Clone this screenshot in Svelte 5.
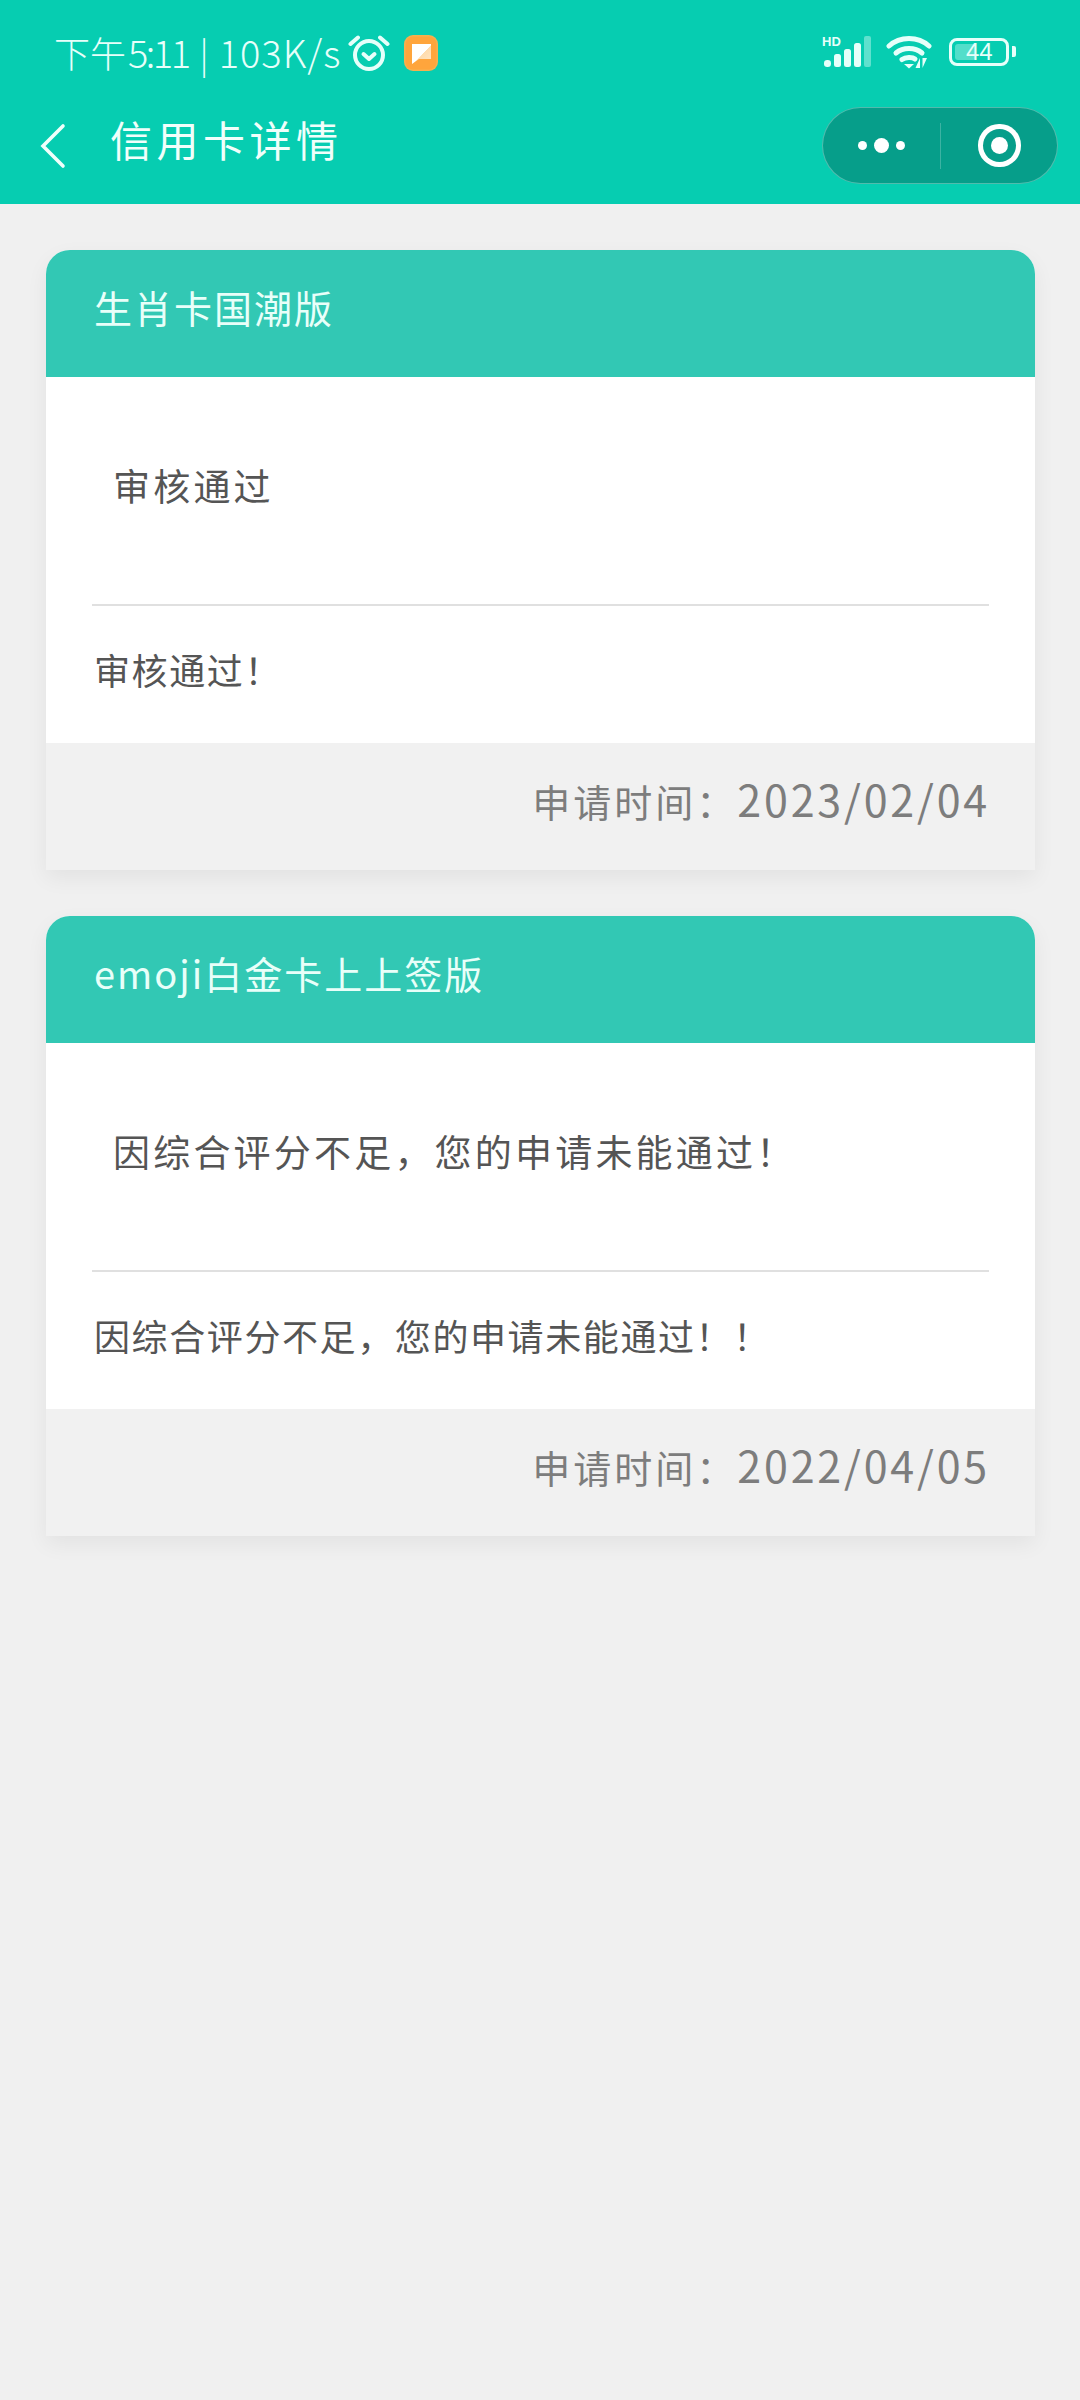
<script>
  const cards = [
    { name: '生肖卡国潮版', status: '审核通过', reason: '审核通过！', label: '申请时间：', date: '2023/02/04' },
    { name: 'emoji白金卡上上签版', status: '因综合评分不足，您的申请未能通过！', reason: '因综合评分不足，您的申请未能通过！！', label: '申请时间：', date: '2022/04/05' }
  ];
</script>

<div class="page">
  <header class="top">
    <div class="status">
      <div class="status-left">
        <span class="clock">下午</span>
        <span class="clock time">5:11</span>
        <span class="clock bar">|</span>
        <span class="clock speed">103K/s</span>
        <svg class="alarm" viewBox="0 0 42 38" width="42" height="38" fill="none" stroke="#e6fffa" stroke-width="4" stroke-linecap="round" stroke-linejoin="round">
          <circle cx="21" cy="21" r="14"/>
          <path d="M2.5 10 L10 3.5 M39.5 10 L32 3.5"/>
          <path d="M15.5 20 L21 25 L26.5 20"/>
        </svg>
        <svg class="app" viewBox="0 0 34 36" width="34" height="36">
          <defs>
            <linearGradient id="note" x1="0" y1="0" x2="1" y2="1">
              <stop offset="0" stop-color="#fff"/>
              <stop offset=".52" stop-color="#fff"/>
              <stop offset=".54" stop-color="#ffdcae"/>
              <stop offset="1" stop-color="#ffe6c6"/>
            </linearGradient>
          </defs>
          <rect width="34" height="36" rx="9" fill="#f7b04e"/>
          <rect x="1.5" y="1.5" width="31" height="33" rx="8" fill="#ffa53c"/>
          <path d="M8 9 H27 V24 H15 L8 29 Z" fill="url(#note)"/>
        </svg>
      </div>
      <div class="status-right">
        <svg class="signal" viewBox="0 0 50 32" width="50" height="32">
          <text x="0" y="10" class="hd">HD</text>
          <rect x="2" y="24" width="7" height="7" rx="3.2" fill="#e6fffa"/>
          <rect x="12" y="18" width="7" height="13" rx="2.5" fill="#e6fffa"/>
          <rect x="22" y="13" width="7" height="18" rx="2.5" fill="#e6fffa"/>
          <rect x="32" y="7" width="7" height="24" rx="2.5" fill="#e6fffa"/>
          <rect x="42" y="0" width="7" height="31" rx="2" fill="#e6fffa" opacity=".4"/>
        </svg>
        <svg class="wifi" viewBox="0 0 46 34" width="46" height="34" fill="none" stroke="#e6fffa" stroke-width="5" stroke-linecap="round">
          <path d="M3 11 C14 1 32 1 43 11"/>
          <path d="M10 18 C17 12 29 12 36 18"/>
          <path d="M16 24.5 C19.5 22 26.5 22 29 24"/>
          <path d="M18 29 H28 L23 33.5 Z" fill="#e6fffa" stroke="none"/>
          <path d="M34 23 V33 H29.5 Z M36.5 33 V23 H41 Z" fill="#e6fffa" stroke="none"/>
        </svg>
        <div class="battery">
          <div class="shell"><span class="level"></span><span class="num">44</span></div>
          <span class="cap"></span>
        </div>
      </div>
    </div>
    <nav class="nav">
      <div class="nav-left">
        <svg class="back" viewBox="0 0 26 46" width="26" height="46" fill="none" stroke="#f0fffb" stroke-width="3.6" stroke-linecap="round">
          <path d="M23 3 L3 23 L23 43"/>
        </svg>
        <h1>信用卡详情</h1>
      </div>
      <div class="capsule">
        <div class="dots"><i></i><b></b><i></i></div>
        <span class="sep"></span>
        <div class="target"><span></span></div>
      </div>
    </nav>
  </header>

  <main class="list">
    {#each cards as c}
      <article class="card">
        <div class="card-head">{c.name}</div>
        <div class="card-status"><span>{c.status}</span></div>
        <div class="card-reason">{c.reason}</div>
        <div class="card-foot">{c.label}<span class="date">{c.date}</span></div>
      </article>
    {/each}
  </main>
</div>

<style>
  :global(body) { margin: 0; background: #f0f0f0; }
  .page {
    min-height: 2400px;
    background: #f0f0f0;
    font-family: "Noto Sans CJK SC", "Noto Sans", sans-serif;
  }
  .top { background: #06cdb1; height: 204px; display: flex; flex-direction: column; }
  .status { height: 107px; display: flex; justify-content: space-between; align-items: center; padding: 0 64px 4px 54px; box-sizing: border-box; }
  .status-left { display: flex; align-items: center; }
  .clock { font-size: 36px; letter-spacing: 0; color: #e6fffa; font-weight: 300; line-height: 40px; white-space: pre; }
  .time { margin-left: 2px; font-size: 38px; letter-spacing: -2.5px; }
  .bar { margin-left: 11px; }
  .speed { margin-left: 10px; font-size: 38px; letter-spacing: 1px; }
  .alarm { margin: 3px 0 0 7px; }
  .app { margin: 3px 0 0 14px; }
  .status-right { display: flex; align-items: center; }
  .signal { overflow: visible; }
  .hd { font: 700 13px "Liberation Sans", sans-serif; fill: #e6fffa; }
  .wifi { margin-left: 14px; }
  .battery { display: flex; align-items: center; margin-left: 17px; }
  .shell { position: relative; width: 54px; height: 22px; border: 3px solid #e6fffa; border-radius: 8px; }
  .level { position: absolute; left: 3px; top: 3px; bottom: 3px; width: 21px; background: rgba(230,255,250,.35); border-radius: 3px; }
  .num { position: absolute; left: 14px; top: -6px; font: 24px/34px "Liberation Sans", sans-serif; color: #e6fffa; }
  .cap { width: 4px; height: 11px; background: #e6fffa; border-radius: 0 2px 2px 0; margin-left: 3px; }
  .nav { display: flex; justify-content: space-between; align-items: flex-start; padding: 0 22px 0 40px; }
  .nav-left { display: flex; align-items: center; height: 77px; }
  h1 { margin: -14px 0 0 44px; font-size: 42px; font-weight: 400; letter-spacing: 4.5px; color: #f0fffb; line-height: 60px; }
  .capsule {
    width: 236px; height: 77px; box-sizing: border-box;
    border-radius: 39px; background: #069e8a; border: 1px solid rgba(255,255,255,.3);
    display: flex; align-items: center;
  }
  .dots { width: 117px; display: flex; align-items: center; justify-content: center; gap: 7px; }
  .dots i { width: 9px; height: 9px; background: #fff; border-radius: 50%; }
  .dots b { width: 15px; height: 15px; background: #fff; border-radius: 50%; }
  .sep { width: 1px; height: 46px; background: rgba(255,255,255,.22); }
  .target { flex: 1; display: flex; align-items: center; justify-content: center; }
  .target span {
    width: 17px; height: 17px; border-radius: 50%; background: #fff;
    box-shadow: 0 0 0 8px #069e8a, 0 0 0 13px #fff;
  }
  .list { padding: 46px 45px 0 46px; display: flex; flex-direction: column; gap: 46px; }
  .card { background: #fff; border-radius: 24px 24px 0 0; box-shadow: 0 8px 22px rgba(0,0,0,.06); }
  .card-head {
    height: 127px; box-sizing: border-box; padding: 32px 0 0 48px;
    background: #32c8b4; border-radius: 24px 24px 0 0;
    color: #e8fff9; font-size: 38px; letter-spacing: 2px; line-height: 50px;
  }
  .card-status {
    margin: 0 46px; height: 229px; box-sizing: border-box;
    padding: 83px 0 0 21px; border-bottom: 2px solid #e0e0e0;
    font-size: 37px; letter-spacing: 3.2px; line-height: 50px; color: #555;
  }
  .card-reason {
    height: 137px; box-sizing: border-box; padding: 38px 0 0 48px;
    font-size: 36px; letter-spacing: 1.6px; line-height: 50px; color: #555;
  }
  .card-foot {
    height: 127px; box-sizing: border-box; padding: 30px 45px 0 0;
    text-align: right; background: #f1f1f1;
    font-size: 38px; letter-spacing: 3px; line-height: 50px; color: #7d7d7d;
  }
  .date { font-size: 43px; letter-spacing: 2.8px; font-weight: 400; }
</style>
